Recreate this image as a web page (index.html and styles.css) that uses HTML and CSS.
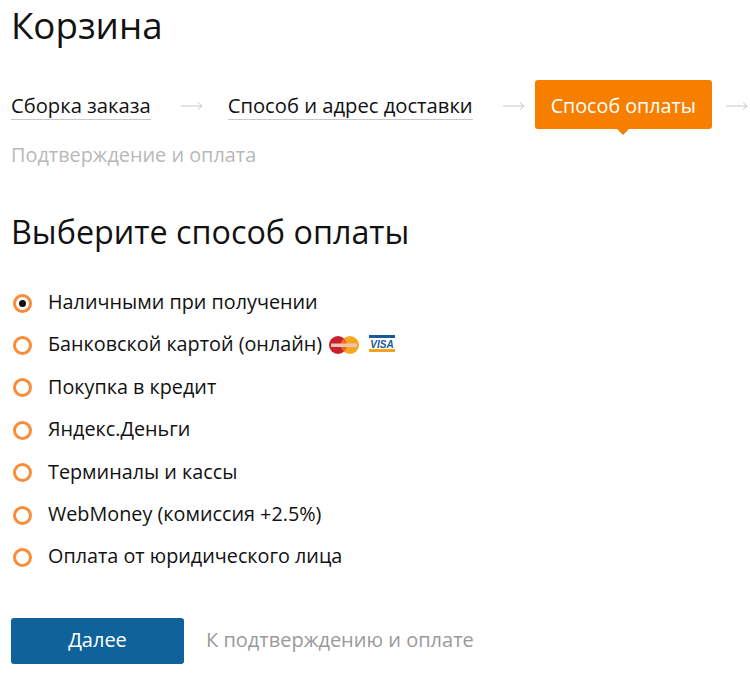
FILE: index.html
```html
<!DOCTYPE html>
<html lang="ru">
<head>
<meta charset="utf-8">
<title>Корзина</title>
<link rel="stylesheet" href="styles.css">
</head>
<body>
<h1 class="title">Корзина</h1>
<ol class="steps">
  <li class="step"><a class="step-link">Сборка заказа</a><svg class="arrow" width="22" height="10" viewBox="0 0 22 10"><path d="M0 5H21M17 1.5L21 5L17 8.5" fill="none" stroke="#c4c8cc" stroke-width="1"/></svg></li>
  <li class="step"><a class="step-link">Способ и адрес доставки</a><svg class="arrow" width="22" height="10" viewBox="0 0 22 10"><path d="M0 5H21M17 1.5L21 5L17 8.5" fill="none" stroke="#c4c8cc" stroke-width="1"/></svg></li>
  <li class="step step-current"><span class="step-active">Способ оплаты</span><svg class="arrow" width="22" height="10" viewBox="0 0 22 10"><path d="M0 5H21M17 1.5L21 5L17 8.5" fill="none" stroke="#c4c8cc" stroke-width="1"/></svg></li>
  <li class="step step-future">Подтверждение и оплата</li>
</ol>
<h2 class="heading">Выберите способ оплаты</h2>
<ul class="options">
  <li class="option"><span class="radio radio-on"></span><span>Наличными при получении</span></li>
  <li class="option"><span class="radio"></span><span>Банковской картой (онлайн)</span><svg class="mc" width="30" height="18" viewBox="0 0 30 18"><circle cx="9" cy="9" r="9" fill="#c8202c"/><circle cx="21" cy="9" r="9" fill="#f5a623"/><path d="M15 2.3a9 9 0 0 1 0 13.4a9 9 0 0 1 0-13.4z" fill="#e8691e"/><rect x="2" y="7.5" width="26" height="3.5" fill="#eec4b0"/></svg><svg class="visa" width="26" height="17" viewBox="0 0 26 17"><rect width="26" height="17" fill="#fff"/><rect width="26" height="3" fill="#1a5a96"/><rect y="14" width="26" height="3" fill="#f2a41f"/><text x="13" y="12.7" class="visa-text" text-anchor="middle">VISA</text></svg></li>
  <li class="option"><span class="radio"></span><span>Покупка в кредит</span></li>
  <li class="option"><span class="radio"></span><span>Яндекс.Деньги</span></li>
  <li class="option"><span class="radio"></span><span>Терминалы и кассы</span></li>
  <li class="option"><span class="radio"></span><span>WebMoney (комиссия +2.5%)</span></li>
  <li class="option"><span class="radio"></span><span>Оплата от юридического лица</span></li>
</ul>
<div class="actions">
  <button class="next">Далее</button>
  <span class="hint">К подтверждению и оплате</span>
</div>
</body>
</html>
```
FILE: styles.css
```css
* { box-sizing: border-box; }
html, body { margin: 0; padding: 0; }
body {
  padding: 0 0 0 11px;
  font-family: "Open Sans", "Noto Sans", sans-serif;
  color: #111;
  background: #fff;
  overflow: hidden;
}
.title {
  margin: 0;
  font-size: 36.7px;
  font-weight: 400;
  line-height: 50px;
}
.steps {
  list-style: none;
  margin: 30px 0 0;
  padding: 0;
  display: flex;
  flex-wrap: wrap;
  align-items: center;
  font-size: 20.2px;
  line-height: 28px;
}
.step { display: flex; align-items: center; height: 50px; }
.step-link { border-bottom: 1px solid #c8c8c8; line-height: 27px; padding-top: 1px; display: block; }
.arrow { margin: 2px 25px 0 30px; flex: none; }
.step-current .arrow { margin: 2px 0 0 14px; }
.step:nth-child(2) .arrow { margin: 2px 10px 0 30px; }
.step-active {
  position: relative;
  display: block;
  background: #f77f00;
  color: #fff;
  border-radius: 3px;
  height: 49px;
  line-height: 51px;
  margin-bottom: 2px;
  padding: 0 16px;
  font-size: 19.7px;
}
.step-active::after {
  content: "";
  position: absolute;
  left: 50%;
  bottom: -6px;
  margin-left: -7px;
  border: 7px solid transparent;
  border-top-color: #f77f00;
  border-bottom: 0;
}
.step-future { color: #b8b8b8; height: 28px; margin-top: 11px; font-size: 19.85px; }
.heading {
  margin: 40px 0 0;
  font-size: 32.3px;
  font-weight: 400;
  line-height: 44px;
}
.options { list-style: none; margin: 27.4px 0 0; padding: 0; font-size: 19.8px; }
.option { display: flex; align-items: center; height: 42.4px; }
.radio {
  width: 19px; height: 19px; margin: 3px 16px 0 2px; border-radius: 50%;
  border: 3px solid #f98d3a; background: #fff; flex: none; position: relative;
}
.radio-on::after {
  content: ""; position: absolute; left: 3px; top: 3px; width: 7px; height: 7px;
  border-radius: 50%; background: #111;
}
.mc { margin-left: 7px; margin-top: 2px; }
.visa { margin-left: 10px; }
.visa-text { font-family: "Liberation Sans", sans-serif; font-size: 10px; font-weight: 700; font-style: italic; fill: #1a5a96; }
.actions { display: flex; align-items: center; margin-top: 40.6px; }
.next {
  width: 173px; height: 46px; border: 0; border-radius: 3px; background: #10629b; color: #fff;
  font: 400 20px "Open Sans", "Noto Sans", sans-serif;
  padding-bottom: 3px;
}
.hint { margin-left: 22px; font-size: 20px; color: #9a9a9a; padding-bottom: 3px; }
```
